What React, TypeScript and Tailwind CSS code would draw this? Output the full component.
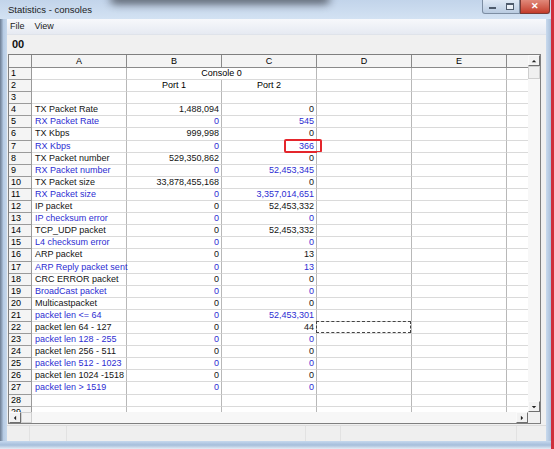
import React from 'react'

// One line of the statistics sheet
interface StatRow {
  label: string
  b: string
  c: string
}

const stats: StatRow[] = [
  { label: 'TX Packet Rate', b: '1,488,094', c: '0' },
  { label: 'RX Packet Rate', b: '0', c: '545' },
  { label: 'TX Kbps', b: '999,998', c: '0' },
  { label: 'RX Kbps', b: '0', c: '366' },
  { label: 'TX Packet number', b: '529,350,862', c: '0' },
  { label: 'RX Packet number', b: '0', c: '52,453,345' },
  { label: 'TX Packet size', b: '33,878,455,168', c: '0' },
  { label: 'RX Packet size', b: '0', c: '3,357,014,651' },
  { label: 'IP packet', b: '0', c: '52,453,332' },
  { label: 'IP checksum error', b: '0', c: '0' },
  { label: 'TCP_UDP packet', b: '0', c: '52,453,332' },
  { label: 'L4 checksum error', b: '0', c: '0' },
  { label: 'ARP packet', b: '0', c: '13' },
  { label: 'ARP Reply packet sent', b: '0', c: '13' },
  { label: 'CRC ERROR packet', b: '0', c: '0' },
  { label: 'BroadCast packet', b: '0', c: '0' },
  { label: 'Multicastpacket', b: '0', c: '0' },
  { label: 'packet len <= 64', b: '0', c: '52,453,301' },
  { label: 'packet len 64 - 127', b: '0', c: '44' },
  { label: 'packet len 128 - 255', b: '0', c: '0' },
  { label: 'packet len 256 - 511', b: '0', c: '0' },
  { label: 'packet len 512 - 1023', b: '0', c: '0' },
  { label: 'packet len 1024 -1518', b: '0', c: '0' },
  { label: 'packet len > 1519', b: '0', c: '0' },
]

const rowHead = 'w-[23px] shrink-0 h-full pl-[2px] leading-[11px] bg-[#f4f4f4] border-r border-b border-[#9a9a9a]'
const cell = 'w-[95px] shrink-0 h-full border-r border-b border-r-[#b8b8b8] border-b-[#dadada] leading-[11px] whitespace-nowrap'
const lastCell = 'flex-1 h-full border-b border-b-[#dadada]'

function Arrow({ dir }: { dir: 'up' | 'down' | 'left' | 'right' }) {
  const pts = {
    up: '1,4 4,1 7,4',
    down: '1,1 4,4 7,1',
    left: '4,1 1,4 4,7',
    right: '1,1 4,4 1,7',
  }[dir]
  const box = dir === 'up' || dir === 'down' ? '0 0 8 5' : '0 0 5 8'
  return (
    <svg viewBox={box} className={dir === 'up' || dir === 'down' ? 'w-[6px] h-[4px]' : 'w-[4px] h-[6px]'}>
      <polygon points={pts} fill="#222" />
    </svg>
  )
}

const btn = 'flex items-center justify-center bg-[#f2f2f2] border border-t-[#fafafa] border-l-[#fafafa] border-r-[#6f6f6f] border-b-[#6f6f6f]'

function App() {
  return (
    <div className="w-[554px] h-[449px] flex overflow-hidden bg-white font-['Liberation_Sans',Arial,sans-serif] text-[9px] text-black">
      <div className="w-[551px] h-full flex flex-col bg-[#bcd0e7]">
        {/* Title bar */}
        <div className="relative h-[19px] shrink-0 flex items-start bg-gradient-to-b from-[#c2d4ea] to-[#d3e2f3] overflow-hidden">
          <div className="absolute left-[110px] top-[-6px] w-[220px] h-[10px] bg-[#3b4049] opacity-80 blur-[4px] rounded-full" />
          <span className="relative pl-[8px] pt-[5px] text-[9.5px] text-[#1c1c1c] leading-[10px]">Statistics - consoles</span>
          <div className="relative ml-auto mr-[1px] flex h-[14px]">
            <div className="w-[38px] flex border border-[#7d8ea3] border-t-0 rounded-bl-[3px] bg-gradient-to-b from-[#dfe9f5] to-[#b9cbe1]">
              <div className="w-[19px] flex items-end justify-center pb-[4px]">
                <div className="w-[7px] h-[2px] bg-white border border-[#4e5b6c]" />
              </div>
              <div className="w-[18px] flex items-center justify-center">
                <div className="w-[8px] h-[7px] border border-[#4e5b6c] border-t-2 bg-white/60" />
              </div>
            </div>
            <div className="w-[30px] flex items-center justify-center rounded-br-[3px] border border-t-0 border-[#7a3a34] bg-gradient-to-b from-[#e0887a] to-[#c33a29]">
              <span className="text-white font-bold text-[9px] leading-[9px]">✕</span>
            </div>
          </div>
        </div>

        <div className="flex-1 flex min-h-0">
          {/* left frame */}
          <div className="w-[7px] shrink-0 bg-gradient-to-r from-[#6c7d93] via-[#b6cbe4] to-[#c6d8ec]" />

          <div className="w-[539px] shrink-0 flex flex-col bg-[#f0f0f0]">
            {/* Menu */}
            <div className="h-[16px] shrink-0 flex items-center gap-[10px] pl-[3px] bg-gradient-to-b from-[#f7f8fb] to-[#e6eaf2] border-b border-[#dfe3ea]">
              <span className="text-[#1a1a1a]">File</span>
              <span className="text-[#1a1a1a]">View</span>
            </div>
            {/* Toolbar */}
            <div className="h-[19px] shrink-0 flex items-center pl-[5px]">
              <span className="font-bold text-[11px] text-[#111]">00</span>
            </div>

            {/* Sheet */}
            <div className="ml-[1px] w-[533px] h-[370px] shrink-0 flex border border-[#7f7f7f] bg-white">
              <div className="w-[519px] shrink-0 flex flex-col">
                <div className="h-[13px] shrink-0 flex bg-[#f4f4f4]">
                  <div className="w-[23px] shrink-0 border-r border-b border-[#8a8a8a]" />
                  {['A', 'B', 'C', 'D', 'E'].map((l) => (
                    <div key={l} className="w-[95px] shrink-0 border-r border-b border-[#8a8a8a] text-center leading-[12px]">
                      {l}
                    </div>
                  ))}
                  <div className="flex-1 border-b border-[#8a8a8a]" />
                </div>

                <div className="h-[344px] shrink-0 overflow-hidden flex flex-col">
                  {/* row 1 */}
                  <div className="flex h-[12.1px] shrink-0">
                    <div className={rowHead}>1</div>
                    <div className={cell} />
                    <div className="w-[190px] shrink-0 h-full border-r border-b border-r-[#b8b8b8] border-b-[#dadada] leading-[11px] text-center">Console 0</div>
                    <div className={cell} />
                    <div className={cell} />
                    <div className={lastCell} />
                  </div>
                  {/* row 2 */}
                  <div className="flex h-[12.1px] shrink-0">
                    <div className={rowHead}>2</div>
                    <div className={cell} />
                    <div className={cell + ' text-center'}>Port 1</div>
                    <div className={cell + ' text-center'}>Port 2</div>
                    <div className={cell} />
                    <div className={cell} />
                    <div className={lastCell} />
                  </div>
                  {/* row 3 */}
                  <div className="flex h-[12.1px] shrink-0">
                    <div className={rowHead}>3</div>
                    <div className={cell} />
                    <div className={cell} />
                    <div className={cell} />
                    <div className={cell} />
                    <div className={cell} />
                    <div className={lastCell} />
                  </div>

                  {stats.map((s, i) => {
                    const n = i + 4
                    const blue = n % 2 === 1
                    const color = blue ? 'text-[#2d2dd2]' : 'text-[#141414]'
                    return (
                      <div key={n} className="flex h-[12.1px] shrink-0">
                        <div className={rowHead}>{n}</div>
                        <div className={`${cell} ${color} pl-[3px]`}>{s.label}</div>
                        <div className={`${cell} ${color} text-right pr-[2px]`}>{s.b}</div>
                        <div className={`${cell} ${color} text-right pr-[2px] relative`}>
                          {s.c}
                          {n === 7 && (
                            <span className="absolute left-[62px] top-[-2px] w-[38px] h-[14px] border-2 border-[#e4262c] rounded-[2px]" />
                          )}
                        </div>
                        <div className={`${cell} relative`}>
                          {n === 22 && <span className="absolute left-[-1px] top-[-1px] right-0 bottom-0 border border-dashed border-[#444]" />}
                        </div>
                        <div className={cell} />
                        <div className={lastCell} />
                      </div>
                    )
                  })}

                  {[28, 29].map((n) => (
                    <div key={n} className="flex h-[12.1px] shrink-0">
                      <div className={rowHead}>{n}</div>
                      <div className={cell} />
                      <div className={cell} />
                      <div className={cell} />
                      <div className={cell} />
                      <div className={cell} />
                      <div className={lastCell} />
                    </div>
                  ))}
                </div>

                {/* horizontal scrollbar */}
                <div className="h-[11px] shrink-0 flex bg-[#f7f7f7]">
                  <div className={`${btn} w-[12px]`}>
                    <Arrow dir="left" />
                  </div>
                  <div className="w-[11px] border border-[#d0d0d0] bg-[#f2f2f2]" />
                  <div className="flex-1" />
                  <div className={`${btn} w-[12px]`}>
                    <Arrow dir="right" />
                  </div>
                </div>
              </div>

              {/* vertical scrollbar */}
              <div className="flex-1 flex flex-col bg-[#f7f7f7]">
                <div className={`${btn} h-[11px]`}>
                  <Arrow dir="up" />
                </div>
                <div className="h-[13px] border border-[#cfcfcf] bg-[#f0f0f0]" />
                <div className="flex-1" />
                <div className={`${btn} h-[11px]`}>
                  <Arrow dir="down" />
                </div>
                <div className="h-[11px] bg-[#f0f0f0]" />
              </div>
            </div>

            {/* Status bar */}
            <div className="flex-1 flex mt-[1px] border-t border-[#dcdcdc] bg-[#efefef]">
              <div className="w-[23px] border-r border-[#e2e2e2]" />
              <div className="w-[37px] border-r border-[#e2e2e2]" />
              <div className="w-[239px] border-r border-[#e2e2e2]" />
              <div className="w-[35px] border-r border-[#e2e2e2]" />
              <div className="w-[176px] border-r border-[#e2e2e2]" />
              <div className="flex-1" />
            </div>
          </div>

          {/* right frame */}
          <div className="flex-1 bg-gradient-to-r from-[#c9daee] to-[#a9bfd9]" />
        </div>

        {/* bottom frame */}
        <div className="h-[8px] shrink-0 bg-gradient-to-b from-[#c5d8ee] via-[#a6bedb] to-[#e4ecf5]" />
      </div>
      <div className="flex-1 bg-[#cf2f3b]" />
    </div>
  )
}

export default App
